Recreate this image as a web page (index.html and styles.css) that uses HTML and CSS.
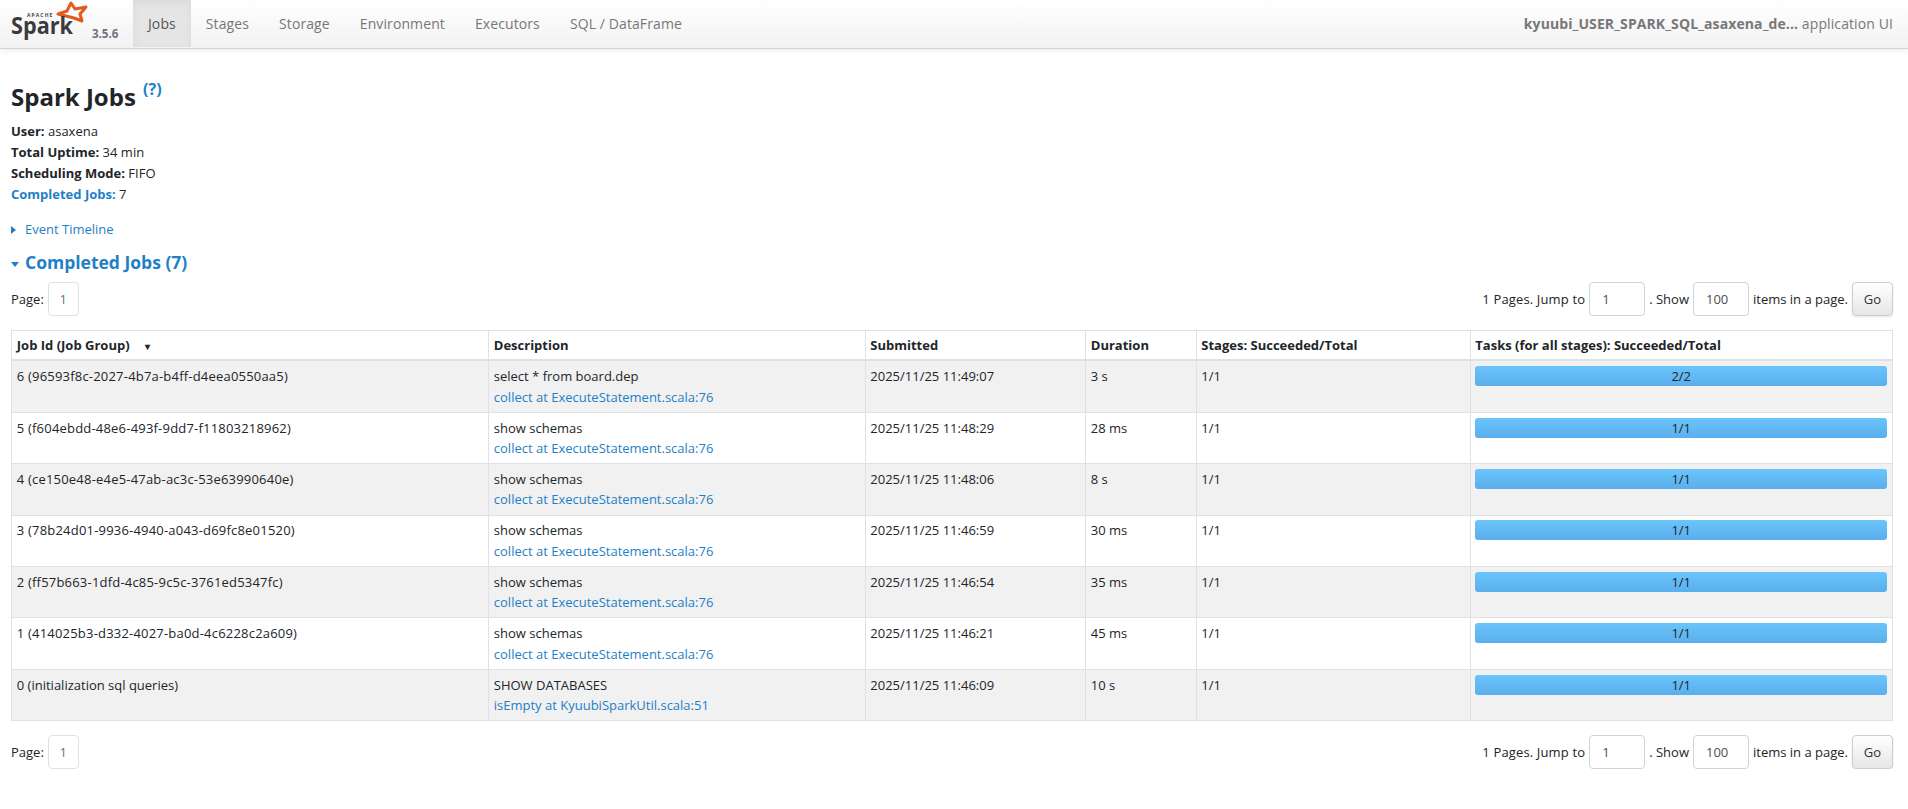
FILE: index.html
```html
<!DOCTYPE html>
<html lang="en">
<head>
  <meta charset="UTF-8" />
  <title>Spark Jobs</title>
  <link rel="stylesheet" href="styles.css">
</head>
<body>
  <nav class="navbar">
    <a class="brand" href="#">
      <svg class="logo" width="90" height="48" viewBox="0 0 90 48">
        <path d="M71 3 L75 9 L86 7 L80 14 L82 21 L74 18 L58 14 L67 11 Z" fill="none" stroke="#e25a1c" stroke-width="3" stroke-linejoin="round" />
        <text class="logo-apache" x="27" y="17">APACHE</text>
        <text class="logo-word" x="11" y="34" textLength="62" lengthAdjust="spacingAndGlyphs">Spark</text>
      </svg>
      <span class="version">3.5.6</span>
    </a>
    <ul class="nav-tabs">
      <li class="active"><a href="#">Jobs</a></li>
      <li><a href="#">Stages</a></li>
      <li><a href="#">Storage</a></li>
      <li><a href="#">Environment</a></li>
      <li><a href="#">Executors</a></li>
      <li><a href="#">SQL / DataFrame</a></li>
    </ul>
    <p class="app-name"><strong>kyuubi_USER_SPARK_SQL_asaxena_de...</strong> application UI</p>
  </nav>

  <div class="container">
    <h3 class="page-title">Spark Jobs <sup><a href="#">(?)</a></sup></h3>

    <ul class="summary">
      <li><strong>User:</strong> asaxena</li>
      <li><strong>Total Uptime:</strong> 34 min</li>
      <li><strong>Scheduling Mode:</strong> FIFO</li>
      <li><a href="#"><strong>Completed Jobs:</strong></a> 7</li>
    </ul>

    <a class="timeline-toggle" href="#"><span class="arrow-right"></span>Event Timeline</a>

    <h4 class="section-title"><span class="arrow-down"></span><a href="#">Completed Jobs (7)</a></h4>

    <div class="pager">
      <div class="pager-left">Page: <span class="page-box">1</span></div>
      <form class="pager-form">
        <span class="pager-count">1 Pages. Jump to</span>
        <input type="text" value="1" />
        <span>. Show</span>
        <input type="text" value="100" />
        <span>items in a page.</span>
        <button type="button">Go</button>
      </form>
    </div>

    <table class="jobs">
      <colgroup>
        <col class="col-id"><col class="col-desc"><col class="col-sub"><col class="col-dur"><col class="col-stages"><col>
      </colgroup>
      <thead>
        <tr>
          <th>Job Id (Job Group) <span class="sort">▾</span></th>
          <th>Description</th>
          <th>Submitted</th>
          <th>Duration</th>
          <th>Stages: Succeeded/Total</th>
          <th>Tasks (for all stages): Succeeded/Total</th>
        </tr>
      </thead>
      <tbody>
        <tr>
          <td class="job-id">6 (96593f8c-2027-4b7a-b4ff-d4eea0550aa5)</td>
          <td>select * from board.dep<br><a href="#">collect at ExecuteStatement.scala:76</a></td>
          <td>2025/11/25 11:49:07</td>
          <td>3 s</td>
          <td>1/1</td>
          <td><div class="progress">2/2</div></td>
        </tr>
        <tr>
          <td class="job-id">5 (f604ebdd-48e6-493f-9dd7-f11803218962)</td>
          <td>show schemas<br><a href="#">collect at ExecuteStatement.scala:76</a></td>
          <td>2025/11/25 11:48:29</td>
          <td>28 ms</td>
          <td>1/1</td>
          <td><div class="progress">1/1</div></td>
        </tr>
        <tr>
          <td class="job-id">4 (ce150e48-e4e5-47ab-ac3c-53e63990640e)</td>
          <td>show schemas<br><a href="#">collect at ExecuteStatement.scala:76</a></td>
          <td>2025/11/25 11:48:06</td>
          <td>8 s</td>
          <td>1/1</td>
          <td><div class="progress">1/1</div></td>
        </tr>
        <tr>
          <td class="job-id">3 (78b24d01-9936-4940-a043-d69fc8e01520)</td>
          <td>show schemas<br><a href="#">collect at ExecuteStatement.scala:76</a></td>
          <td>2025/11/25 11:46:59</td>
          <td>30 ms</td>
          <td>1/1</td>
          <td><div class="progress">1/1</div></td>
        </tr>
        <tr>
          <td class="job-id">2 (ff57b663-1dfd-4c85-9c5c-3761ed5347fc)</td>
          <td>show schemas<br><a href="#">collect at ExecuteStatement.scala:76</a></td>
          <td>2025/11/25 11:46:54</td>
          <td>35 ms</td>
          <td>1/1</td>
          <td><div class="progress">1/1</div></td>
        </tr>
        <tr>
          <td class="job-id">1 (414025b3-d332-4027-ba0d-4c6228c2a609)</td>
          <td>show schemas<br><a href="#">collect at ExecuteStatement.scala:76</a></td>
          <td>2025/11/25 11:46:21</td>
          <td>45 ms</td>
          <td>1/1</td>
          <td><div class="progress">1/1</div></td>
        </tr>
        <tr>
          <td>0 (initialization sql queries)</td>
          <td>SHOW DATABASES<br><a href="#">isEmpty at KyuubiSparkUtil.scala:51</a></td>
          <td>2025/11/25 11:46:09</td>
          <td>10 s</td>
          <td>1/1</td>
          <td><div class="progress">1/1</div></td>
        </tr>
      </tbody>
    </table>

    <div class="pager pager-bottom">
      <div class="pager-left">Page: <span class="page-box">1</span></div>
      <form class="pager-form">
        <span class="pager-count">1 Pages. Jump to</span>
        <input type="text" value="1" />
        <span>. Show</span>
        <input type="text" value="100" />
        <span>items in a page.</span>
        <button type="button">Go</button>
      </form>
    </div>
  </div>
</body>
</html>
```

FILE: styles.css
```css
body {
  margin: 0;
  background: #fff;
  color: #212529;
  font-family: "Open Sans", "Noto Sans", sans-serif;
  font-size: 13px;
  line-height: 21px;
}

a {
  color: #1f80c6;
  text-decoration: none;
}

.navbar {
  display: flex;
  align-items: stretch;
  height: 48px;
  background: linear-gradient(to bottom, #fff, #f2f2f2);
  border-bottom: 1px solid #d4d4d4;
  box-shadow: 0 2px 6px rgba(0, 0, 0, 0.07);
}

.brand {
  display: flex;
  width: 133px;
  flex: none;
}

.logo {
  flex: none;
}

.logo-apache {
  font-size: 5px;
  font-weight: 700;
  letter-spacing: 1.1px;
  fill: #444;
}

.logo-word {
  font-size: 23px;
  font-weight: 700;
  fill: #3c3a3e;
}

.version {
  margin: 23px 0 0 2px;
  font-size: 11.5px;
  font-weight: 700;
  color: #6c7280;
}

.nav-tabs {
  display: flex;
  margin: 0;
  padding: 0;
  list-style: none;
  font-size: 14px;
  letter-spacing: 0.1px;
}

.nav-tabs a {
  display: block;
  padding: 13px 15px;
  color: #777;
}

.nav-tabs .active a {
  background: #e5e5e5;
  color: #555;
  box-shadow: inset 0 3px 8px rgba(0, 0, 0, 0.05);
}

.app-name {
  margin: 13px 15px 0 auto;
  color: #777;
  font-size: 14px;
  letter-spacing: 0.1px;
}

.container {
  padding: 0 15px 0 11px;
}

.page-title {
  margin: 32px 0 8px;
  font-size: 24px;
  font-weight: 700;
  line-height: 32px;
}

.page-title sup {
  position: relative;
  top: -0.7em;
  margin-left: 1px;
  font-size: 16px;
  line-height: 0;
  vertical-align: baseline;
}

.summary {
  margin: 0 0 14px;
  padding: 0;
  list-style: none;
}

.timeline-toggle {
  display: block;
}

.arrow-right {
  display: inline-block;
  margin-right: 9px;
  border-left: 5px solid #1f80c6;
  border-top: 4px solid transparent;
  border-bottom: 4px solid transparent;
}

.section-title {
  margin: 10px 0 8px;
  font-size: 17.5px;
  font-weight: 700;
  line-height: 24px;
}

.arrow-down {
  display: inline-block;
  margin-right: 6px;
  vertical-align: middle;
  border-top: 5px solid #1f80c6;
  border-left: 4px solid transparent;
  border-right: 4px solid transparent;
}

.pager {
  display: flex;
  justify-content: space-between;
  align-items: center;
  height: 34px;
  margin-bottom: 14px;
}

.pager-bottom {
  margin: 14px 0 0;
}

.pager-left {
  display: flex;
  align-items: center;
  gap: 4px;
}

.page-box {
  width: 31px;
  height: 34px;
  box-sizing: border-box;
  border: 1px solid #dee2e6;
  border-radius: 4px;
  color: #6c757d;
  text-align: center;
  line-height: 32px;
}

.pager-form {
  display: flex;
  align-items: center;
  gap: 4px;
}

.pager-count {
  letter-spacing: 0.15px;
}

.pager-form input {
  width: 56px;
  height: 34px;
  box-sizing: border-box;
  padding: 0 12px;
  border: 1px solid #ced4da;
  border-radius: 4px;
  color: #495057;
  font: inherit;
}

.pager-form button {
  width: 41px;
  height: 34px;
  border: 1px solid #ccc;
  border-radius: 4px;
  background: linear-gradient(to bottom, #fff, #e6e6e6);
  box-shadow: 0 1px 2px rgba(0, 0, 0, 0.1);
  color: #333;
  font: inherit;
  padding: 0;
}

.jobs {
  width: 100%;
  table-layout: fixed;
  border-collapse: collapse;
  border: 1px solid #dee2e6;
  line-height: 20.4px;
}

.col-id { width: 477px; }
.col-desc { width: 376.5px; }
.col-sub { width: 220.5px; }
.col-dur { width: 110.5px; }
.col-stages { width: 274px; }

.jobs th,
.jobs td {
  padding: 4.8px;
  border: 1px solid #dee2e6;
  text-align: left;
  vertical-align: top;
}

.jobs th {
  padding-top: 3.5px;
  padding-bottom: 3.5px;
  border-bottom-width: 2px;
  font-weight: 700;
}

.jobs tbody tr:nth-child(odd) {
  background: #f1f1f1;
}

.jobs .job-id {
  letter-spacing: 0.2px;
}

.sort {
  margin-left: 12px;
  font-size: 10px;
}

.progress {
  height: 20px;
  border-radius: 3px;
  background: linear-gradient(to bottom, #6ac5fb, #5aaeec);
  line-height: 20px;
  text-align: center;
}
```
